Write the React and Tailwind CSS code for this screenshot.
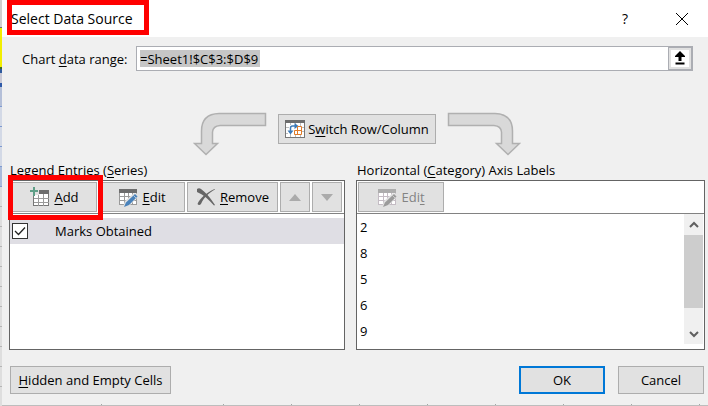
import React from 'react';

const axisLabels = ['2', '8', '5', '6', '9'];

// sliver of the worksheet that shows beside the dialog
const sheetRows = [
  'h-[27px] bg-[#d0d0d0]',
  'h-px bg-[#6d6d6d]',
  'h-[39px] bg-[#f2ee00]',
  'h-[2px] bg-[#3d6b2c]',
  'h-[4px] bg-[#2f5a9e]',
  'h-[10px] bg-[#c9c9d6]',
  'h-[4px] bg-[#2f5aa8]',
  'h-5 border-b border-[#7f9bd0] bg-[#b4bfd8]',
  'h-5 border-b border-[#7f9bd0] bg-[#d3d9e6]',
  'h-5 border-b border-[#7f9bd0] bg-[#d3d9e6]',
  'h-5 border-b border-[#7f9bd0] bg-[#d3d9e6]',
  'h-5 border-b border-[#7f9bd0] bg-[#a9bbdc]',
  'h-5 border-b border-[#b5b5b5] bg-[#dedede]',
  'h-5 border-b border-[#b5b5b5] bg-[#dedede]',
  'h-5 border-b border-[#b5b5b5] bg-[#dedede]',
  'h-5 border-b border-[#b5b5b5] bg-[#dedede]',
  'h-5 border-b border-[#b5b5b5] bg-[#dedede]',
  'h-5 border-b border-[#b5b5b5] bg-[#dedede]',
  'h-5 border-b border-[#b5b5b5] bg-[#dedede]',
  'h-5 border-b border-[#b5b5b5] bg-[#dedede]',
  'h-5 border-b border-[#b5b5b5] bg-[#dedede]',
  'h-5 border-b border-[#b5b5b5] bg-[#dedede]',
  'flex-1 bg-[#dedede]',
];

const sheetColumns = [
  'w-[100px]', 'w-[122px]', 'w-[68px]', 'w-[68px]', 'w-[68px]',
  'w-[68px]', 'w-[68px]', 'w-[68px]', 'w-[68px]',
];

function Button({ className = '', children, ...rest }) {
  return (
    <button
      type="button"
      className={`flex shrink-0 items-center justify-center border border-[#adadad] bg-[#e1e1e1] whitespace-nowrap ${className}`}
      {...rest}
    >
      {children}
    </button>
  );
}

function Key({ children }) {
  return <span className="underline underline-offset-2">{children}</span>;
}

function TableGrid({ head, line }) {
  return (
    <>
      <rect x="1.5" y="2.5" width="17" height="15" fill="#fff" stroke={line} />
      <path d="M6.5 6v12M10.5 6v12M14.5 6v12M1 9.5h18M1 13.5h18" stroke={line} fill="none" />
      <rect x="1" y="2" width="18" height="4" fill={head} />
    </>
  );
}

function AddIcon() {
  return (
    <svg width="20" height="20" viewBox="0 0 20 20" aria-hidden="true">
      <rect x="3.5" y="4.5" width="15" height="14" fill="#fff" stroke="#777" />
      <path d="M8.5 7v12M13.5 7v12M4 11.5h15M4 15.5h15" stroke="#9a9a9a" fill="none" />
      <path d="M0 0h9v8H0z" fill="#e1e1e1" />
      <path d="M9 3h10v4H9z" fill="#6d6d6d" />
      <path d="M3 0h2v3h3v2H5v4H3V5H0V3h3z" fill="#5f9f88" />
    </svg>
  );
}

function EditIcon({ muted = false }) {
  return (
    <svg width="20" height="20" viewBox="0 0 20 20" aria-hidden="true">
      <TableGrid head={muted ? '#adadad' : '#6d6d6d'} line={muted ? '#c4bcc4' : '#9a9a9a'} />
      <path d="M16 6l4 1v3l-9 9-6 1 2-6z" fill="#e1e1e1" />
      <path d="M17 7l2.5 2.5L11 18l-5 2 2-4.5z" fill={muted ? '#9b9b9b' : '#4a82ba'} />
      <path d="M15.5 8.5l2.5 2.5" stroke="#e1e1e1" strokeWidth="0.7" />
    </svg>
  );
}

function RemoveIcon() {
  return (
    <svg width="20" height="18" viewBox="0 0 20 18" aria-hidden="true">
      <path d="M1 1q2-1.5 4 0c5 4 9 8 14 16l-1 .5C13 12 8 7 1 4z" fill="#666" />
      <path d="M19 1.5C13 5 8 9 5 16q-2 2-3.5 0C4 10 10 5 18.5 1z" fill="#666" />
    </svg>
  );
}

function SwitchIcon() {
  return (
    <svg width="20" height="20" viewBox="0 0 20 20" aria-hidden="true">
      <rect x="0.5" y="1.5" width="19" height="17" fill="#fff" stroke="#777" />
      <path d="M0 1h20v3H0z" fill="#6d6d6d" />
      <path d="M5.5 4v2M10.5 4v1M15.5 4v3M1 8.5h3M1 14.5h2M17 8.5h2M17 12.5h2M5.5 15v3M10.5 16v2M15.5 16v2" stroke="#bdbdbd" fill="none" />
      <path d="M5.5 13V9q0-2 2-2h3" stroke="#3c7ab8" strokeWidth="1.5" fill="none" />
      <path d="M9.5 4l4 3-4 3zM2.5 11.5h6l-3 4z" fill="#3c7ab8" />
      <path d="M9.5 15.5v-4h7M12.5 15.5v-8h4v8h-7" stroke="#e07b28" fill="none" />
    </svg>
  );
}

function CurvedArrow({ className = '' }) {
  return (
    <svg className={className} width="74" height="44" viewBox="0 0 74 44" aria-hidden="true">
      <path
        d="M72.5 1.5H26Q8.5 2 8.5 19V31.500H1.5L13 42.5 24.5 31.5H19.5V20Q20 14 27 13.5H72.5z"
        fill="#d9d9d9"
        stroke="#b0b0b0"
        strokeWidth="1.5"
      />
    </svg>
  );
}

function App() {
  return (
    <div className="flex h-screen min-h-fit bg-[#f0f0f0] font-['Open_Sans','Noto_Sans',sans-serif] text-[13px] leading-5 text-black">
      <div className="flex w-0.5 shrink-0 flex-col" aria-hidden="true">
        {sheetRows.map((row, i) => (
          <span key={i} className={row} />
        ))}
      </div>

      <main className="flex min-w-0 flex-1 flex-col">
        <header className="relative flex h-[37px] items-center bg-white pr-5 pl-[9px]">
          <h1 className="flex-1 text-[14px]">Select Data Source</h1>
          <button type="button" className="mr-12 text-[14px]" aria-label="Help">?</button>
          <button type="button" aria-label="Close">
            <svg width="12" height="12" viewBox="0 0 12 12" aria-hidden="true">
              <path d="M0 0l12 12M12 0L0 12" stroke="#000" fill="none" />
            </svg>
          </button>
          <span className="absolute top-0 left-[5px] h-[35px] w-[142px] border-[5px] border-[#ff0000]" />
        </header>

        <div className="flex items-center pt-[9px] pr-[15px] pl-5">
          <label htmlFor="range" className="w-[114px]">
            Chart <Key>d</Key>ata range:
          </label>
          <div className="flex h-[25px] min-w-0 flex-1 border border-[#abadb3] bg-white">
            <div className="flex min-w-0 flex-1 items-center pl-[3px]">
              <input
                id="range"
                defaultValue="=Sheet1!$C$3:$D$9"
                className="h-[17px] w-[120px] bg-[#c6c6c6] outline-none"
              />
            </div>
            <button type="button" aria-label="Collapse dialog" className="flex w-6 items-center justify-center border border-[#abadb3] bg-[#e1e1e1]">
              <svg width="18" height="17" viewBox="0 0 18 17" aria-hidden="true">
                <path d="M0 0h18v17H0z" fill="#fff" />
                <path d="M9 1l5 5v1h-3.5v4h-3V7H4V6zM4.5 12.5h9v2h-9z" fill="#000" />
              </svg>
            </button>
          </div>
        </div>

        <div className="mt-[41px] flex items-start justify-center gap-[11px] pl-1">
          <CurvedArrow />
          <Button className="mt-0.5 h-[30px] w-[158px] gap-[3px]">
            <SwitchIcon />
            <span>S<Key>w</Key>itch Row/Column</span>
          </Button>
          <CurvedArrow className="-scale-x-100" />
        </div>

        <div className="mt-1 flex gap-[11px] pr-[3px] pl-[7px]">
          <section className="min-w-0 flex-[337]">
            <h2 className="h-5 pl-px">Legend Entries (<Key>S</Key>eries)</h2>
            <div className="h-[170px] border border-[#646464] bg-white">
              <div className="relative flex h-[33px] items-center gap-0.5 border-b border-[#828282] pl-0.5">
                <Button className="h-[30px] w-[85px] gap-1">
                  <AddIcon />
                  <span><Key>A</Key>dd</span>
                </Button>
                <Button className="h-[30px] w-[86px] gap-1">
                  <EditIcon />
                  <span><Key>E</Key>dit</span>
                </Button>
                <Button className="h-[30px] w-[91px] gap-1">
                  <RemoveIcon />
                  <span><Key>R</Key>emove</span>
                </Button>
                <Button className="h-[30px] w-[30px]" aria-label="Move up">
                  <svg width="12" height="7" viewBox="0 0 12 7" aria-hidden="true"><path d="M0 7l6-7 6 7z" fill="#ababab" /></svg>
                </Button>
                <Button className="h-[30px] w-[30px]" aria-label="Move down">
                  <svg width="12" height="7" viewBox="0 0 12 7" aria-hidden="true"><path d="M0 0l6 7 6-7z" fill="#ababab" /></svg>
                </Button>
                <span className="absolute -top-1.5 -left-0.5 h-[45px] w-[95px] border-[5px] border-[#ff0000]" />
              </div>
              <label className="mt-1 flex h-[26px] items-center bg-[#dfdee4] pl-0.5">
                <span className="relative mr-[27px] flex size-4">
                  <input type="checkbox" defaultChecked className="peer size-4 appearance-none border border-[#333] bg-white" />
                  <svg className="pointer-events-none absolute inset-0 hidden peer-checked:block" width="16" height="16" viewBox="0 0 16 16" aria-hidden="true">
                    <path d="M3 8l3.5 3.5L13 4.5" stroke="#222" strokeWidth="1.3" fill="none" />
                  </svg>
                </span>
                Marks Obtained
              </label>
            </div>
          </section>

          <section className="min-w-0 flex-[350]">
            <h2 className="h-5 pl-px">Horizontal (<Key>C</Key>ategory) Axis Labels</h2>
            <div className="flex h-[170px] flex-col border border-[#646464] bg-white">
              <div className="flex h-[33px] shrink-0 items-center border-b border-[#828282] pl-px">
                <Button className="h-[30px] w-[86px] gap-1 text-[#838383]" disabled>
                  <EditIcon muted />
                  <span>Edi<Key>t</Key></span>
                </Button>
              </div>
              <div className="flex flex-1">
                <ul className="flex-1 pl-[3px]">
                  {axisLabels.map((label) => (
                    <li key={label} className="h-[26px] leading-[26px]">{label}</li>
                  ))}
                </ul>
                <div className="mr-px flex h-[130px] w-[19px] flex-col bg-[#f0f0f0]">
                  <button type="button" aria-label="Scroll up" className="flex h-[21px] items-center justify-center">
                    <svg width="10" height="7" viewBox="0 0 10 7" aria-hidden="true"><path d="M1 6l4-4 4 4" stroke="#606060" strokeWidth="2" fill="none" /></svg>
                  </button>
                  <div className="flex-1 bg-[#cdcdcd]" />
                  <button type="button" aria-label="Scroll down" className="flex h-9 items-center justify-center pt-4">
                    <svg width="10" height="7" viewBox="0 0 10 7" aria-hidden="true"><path d="M1 1l4 4 4-4" stroke="#606060" strokeWidth="2" fill="none" /></svg>
                  </button>
                </div>
              </div>
            </div>
          </section>
        </div>

        <footer className="mt-4 flex items-center gap-[13px] pr-1 pl-2">
          <Button className="h-7 w-[161px]">
            <span><Key>H</Key>idden and Empty Cells</span>
          </Button>
          <button type="button" className="ml-auto h-7 w-[86px] border-2 border-[#0078d7] bg-[#e1e1e1]">OK</button>
          <Button className="h-7 w-[86px]">Cancel</Button>
        </footer>

        <div className="mt-auto flex h-0.5 overflow-hidden border-b border-[#bdbdbd]" aria-hidden="true">
          {sheetColumns.map((col, i) => (
            <span key={i} className={`shrink-0 border-r border-[#a6a6a6] ${col}`} />
          ))}
        </div>
      </main>
    </div>
  );
}

export default App;
